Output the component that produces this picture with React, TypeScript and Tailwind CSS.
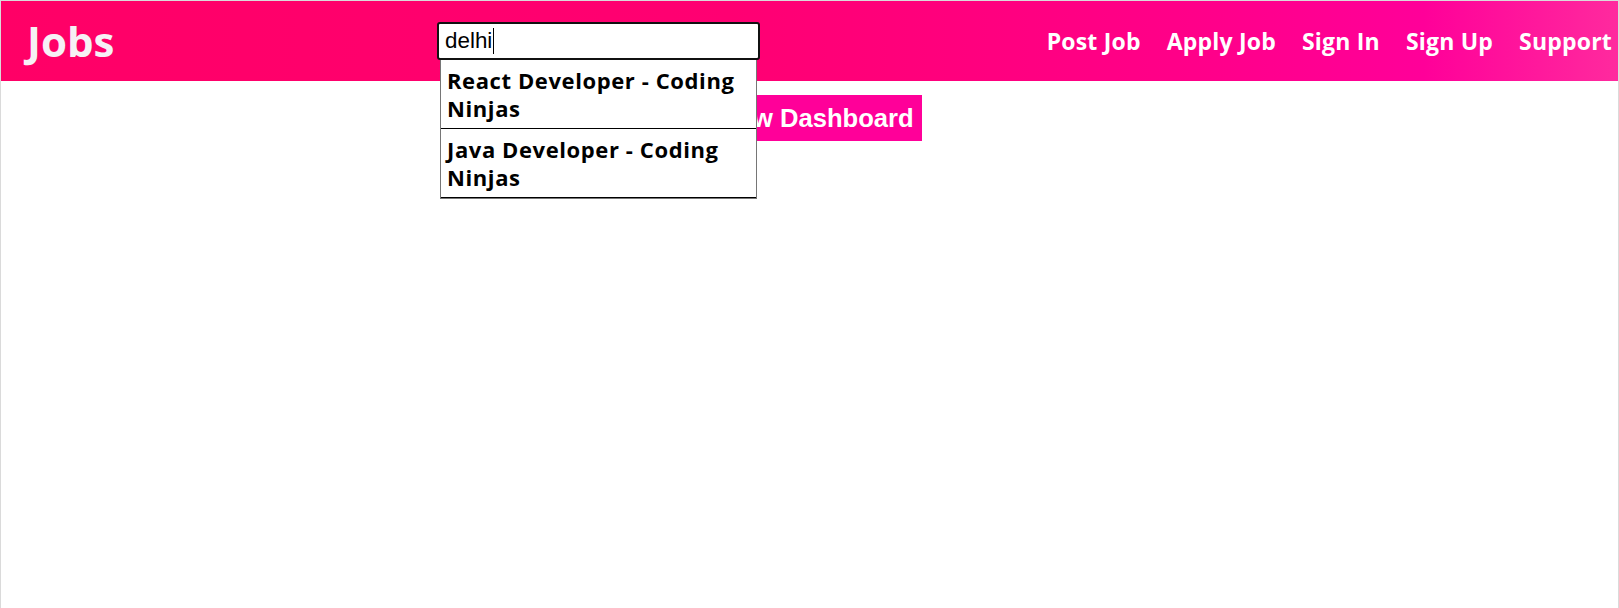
const links = ['Post Job', 'Apply Job', 'Sign In', 'Sign Up', 'Support'];

const results = [
  ['React Developer - Coding', 'Ninjas'],
  ['Java Developer - Coding', 'Ninjas'],
];

const SearchBox = () => (
  <div className="relative w-[323px]">
    <div className="h-[38px] rounded-[3px] border-2 border-[#111] bg-white pl-[6px] flex items-center font-['Liberation_Sans',Arial,sans-serif] text-[22.4px] text-black">
      <span>delhi</span>
      <span className="ml-[1px] inline-block w-px h-[26px] bg-black" />
    </div>
    <ul className="absolute top-full left-[3px] right-[3px] z-10 bg-white border border-t-0 border-[#767676]">
      {results.map(([a, b]) => (
        <li key={a} className="px-[6px] pt-[6px] pb-[6px] border-b border-black text-[22px] tracking-[0.6px] leading-[28px] font-bold text-black">
          <span className="block">{a}</span>
          <span className="block">{b}</span>
        </li>
      ))}
    </ul>
  </div>
);

export default function App() {
  return (
    <div className="min-h-[608px] bg-white border-l border-t border-r border-[#dadada] font-['Open_Sans','Noto_Sans',sans-serif]">
      <header className="h-[80px] flex items-center pl-[26px] pr-[6px] text-white bg-[linear-gradient(90deg,#ff0066_0%,#ff0072_45%,#ff008a_75%,#ff0099_88%,#ff2a9e_100%)]">
        <div className="w-[410px] shrink-0 text-[42px] font-bold text-[#f6f1f5] leading-none">Jobs</div>
        <SearchBox />
        <nav className="ml-auto flex items-center gap-[26px] text-[23px] tracking-[0.2px] font-bold">
          {links.map((l) => (
            <a key={l} href="#" className="whitespace-nowrap">{l}</a>
          ))}
        </nav>
      </header>
      <main className="pt-[14px]">
        <button className="ml-[706px] bg-[#ff0099] px-2 py-2 text-white font-bold text-[25.6px] font-['Liberation_Sans',Arial,sans-serif] leading-[30px]">
          View Dashboard
        </button>
      </main>
    </div>
  );
}
